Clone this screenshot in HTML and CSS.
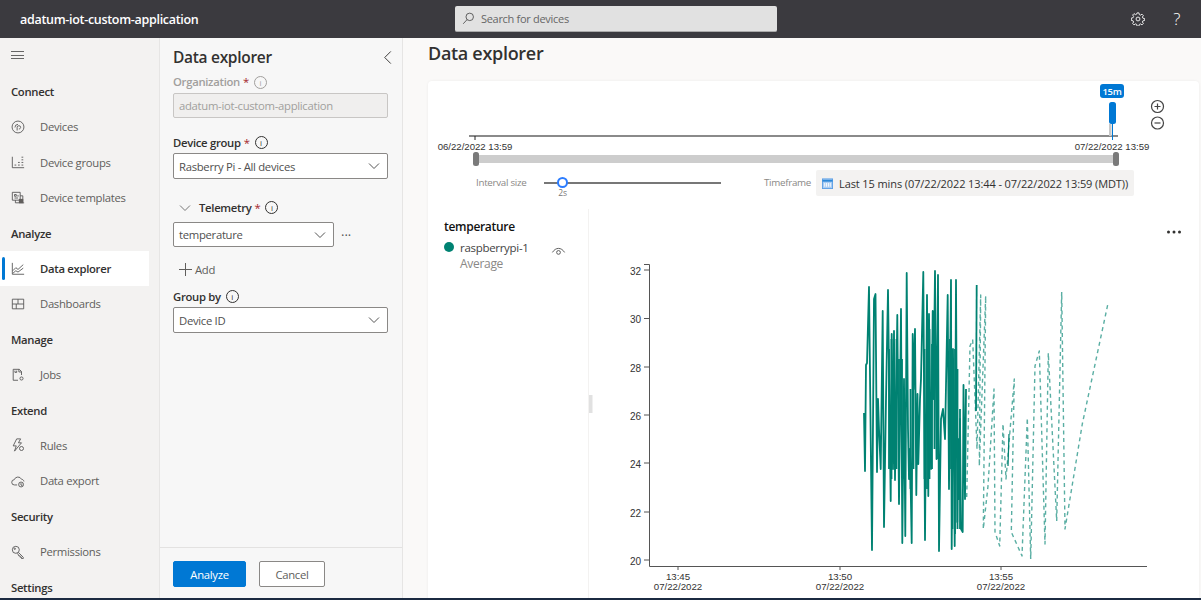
FILE: index.html
```html
<!DOCTYPE html>
<html lang="en">
<head>
  <meta charset="UTF-8" />
  <title>Data explorer</title>
  <link rel="stylesheet" href="styles.css">
</head>
<body>
  <header class="topbar">
    <div class="app-name">adatum-iot-custom-application</div>
    <div class="search">
      <svg class="search-icon" viewBox="0 0 16 16"><circle cx="9.5" cy="6" r="4.6"/><path d="M6.2 9.4 1.5 14.5"/></svg>
      <span>Search for devices</span>
    </div>
    <div class="top-icons">
      <svg class="gear" viewBox="0 0 16 16"><circle cx="8" cy="8" r="2.2"/><path d="M6.9 1h2.2l.4 2 1.3.6 1.8-1.1 1.5 1.5-1.1 1.8.6 1.3 2 .4v2.2l-2 .4-.6 1.3 1.1 1.8-1.5 1.5-1.8-1.1-1.3.6-.4 2H6.900l-.4-2-1.300-.6-1.800 1.100-1.500-1.500 1.100-1.800-.6-1.300-2-.4V6.900l2-.4.6-1.300-1.100-1.800 1.500-1.500 1.800 1.100 1.300-.6z"/></svg>
      <span class="help">?</span>
    </div>
  </header>

  <div class="layout">
    <nav class="sidenav">
      <div class="hamburger"><span></span><span></span><span></span></div>
      <div class="nav-head">Connect</div>
      <a class="nav-item">
        <svg viewBox="0 0 16 16"><circle cx="8" cy="8" r="6.8"/><path d="M4.500 8.500a3.500 3.500 0 0 1 3.500-3.500M7 12V8.500a2 2 0 0 1 4 0c0 1-1 1.800-2 1.800"/></svg>
        Devices</a>
      <a class="nav-item">
        <svg viewBox="0 0 16 16"><path d="M1.500 2v12.500H15M4 11.500h2M8 11.500h2M12 11.500h2M8 8.500h2M12 8.500h2M12 5.500h2M12 2.500h2"/></svg>
        Device groups</a>
      <a class="nav-item">
        <svg viewBox="0 0 16 16"><path d="M1.500 1.500h9v9h-9zM4 4h2v2H4zM8 4.500v2M4 8h4M10.500 5.500h3v7M5 10.500v3h10"/><path d="M9 9h5v5H9z" class="fill"/></svg>
        Device templates</a>
      <div class="nav-head">Analyze</div>
      <a class="nav-item active">
        <svg viewBox="0 0 16 16"><path d="M1.500 1v13h13.500M2 10l3.500-3.500 2.500 2L14 3M2 13l3.500-3 2.500 1.500L14 7"/></svg>
        Data explorer</a>
      <a class="nav-item">
        <svg viewBox="0 0 16 16"><path d="M1.500 2.500h13v11h-13zM1.500 8h13M8 2.500V8M6 8v5.500"/></svg>
        Dashboards</a>
      <div class="nav-head">Manage</div>
      <a class="nav-item">
        <svg viewBox="0 0 16 16"><path d="M8 14H2.500V1.500h7L12 4v4M9 1.500V4.500h3M4.500 3v2h2V3"/><circle cx="12" cy="12" r="1.800"/></svg>
        Jobs</a>
      <div class="nav-head">Extend</div>
      <a class="nav-item">
        <svg viewBox="0 0 16 16"><path d="M6.500 1h4.500L8.500 5.500h3.500L4 15l2-6H2.500z"/><circle cx="12" cy="12" r="2.300"/></svg>
        Rules</a>
      <a class="nav-item">
        <svg viewBox="0 0 16 16"><path d="M7 12.500H4a3 3 0 0 1-.3-6A4.500 4.500 0 0 1 12 6c1.300.1 2.500 1 2.800 2.500"/><circle cx="11.500" cy="12" r="2.800"/><path d="M10 11.500h3M11.500 13h1.500"/></svg>
        Data export</a>
      <div class="nav-head">Security</div>
      <a class="nav-item">
        <svg viewBox="0 0 16 16"><circle cx="5.500" cy="5.500" r="4"/><path d="M8.500 8.500 14 14v1.500h-2V14h-1.500v-1.500H9L7.500 9.500"/><circle cx="4.300" cy="4.300" r=".8"/></svg>
        Permissions</a>
      <div class="nav-head">Settings</div>
    </nav>

    <aside class="panel">
      <div class="panel-title">
        <h2>Data explorer</h2>
        <svg class="collapse" viewBox="0 0 10 16"><path d="M8 1.500 1.500 8 8 14.500"/></svg>
      </div>
      <div class="panel-body">
        <div class="label muted">Organization <b>*</b> <i class="info">i</i></div>
        <div class="field disabled">adatum-iot-custom-application</div>

        <div class="label gap-group">Device group <b>*</b> <i class="info">i</i></div>
        <div class="field">Rasberry Pi - All devices
          <svg class="caret" viewBox="0 0 12 8"><path d="M1 1.500 6 6.500l5-5"/></svg>
        </div>

        <div class="label telemetry">
          <svg class="caret small" viewBox="0 0 12 8"><path d="M1 1.500 6 6.500l5-5"/></svg>
          Telemetry <b>*</b> <i class="info">i</i>
        </div>
        <div class="field-row">
          <div class="field narrow">temperature
            <svg class="caret" viewBox="0 0 12 8"><path d="M1 1.500 6 6.500l5-5"/></svg>
          </div>
          <span class="more">···</span>
        </div>

        <div class="add">
          <svg class="plus" viewBox="0 0 13 13"><path d="M6.500 0v13M0 6.500h13"/></svg>
          Add
        </div>

        <div class="label by">Group by <i class="info">i</i></div>
        <div class="field">Device ID
          <svg class="caret" viewBox="0 0 12 8"><path d="M1 1.500 6 6.500l5-5"/></svg>
        </div>
      </div>
      <div class="panel-foot">
        <button class="btn primary">Analyze</button>
        <button class="btn">Cancel</button>
      </div>
    </aside>

    <main class="main">
      <h1>Data explorer</h1>
      <section class="card">
        <!-- viewBox uses page coordinates, easier to line up -->
        <svg class="brush" viewBox="428 81 771 87">
          <rect class="badge" x="1100" y="84" width="24" height="14" rx="3"/>
          <text class="badge-text" x="1112" y="95">15m</text>
          <path class="base" d="M469 136H1118"/>
          <path class="tick" d="M475 136v4"/>
          <rect class="grey" x="1109" y="124" width="2.500" height="12"/>
          <rect class="blue" x="1109" y="102" width="7" height="22" rx="2.500"/>
          <path class="stem" d="M1112.500 120v20"/>
          <text class="date" x="475" y="149.500">06/22/2022 13:59</text>
          <text class="date" x="1112" y="149.500">07/22/2022 13:59</text>
          <rect class="track" x="475" y="155" width="642" height="8"/>
          <rect class="handle" x="473" y="152" width="6" height="14" rx="2.500"/>
          <rect class="handle" x="1113" y="152" width="6" height="14" rx="2.500"/>
          <g class="zoom">
            <circle cx="1157.500" cy="106.500" r="6"/><path d="M1154.500 106.500h6M1157.500 103.500v6"/>
            <circle cx="1157.500" cy="123" r="6"/><path d="M1154.500 123h6"/>
          </g>
        </svg>

        <div class="controls">
          <span class="ctl-label interval">Interval size</span>
          <div class="slider"><span class="thumb"></span><span class="slider-val">2s</span></div>
          <span class="ctl-label timeframe">Timeframe</span>
          <div class="range-btn">
            <svg viewBox="0 0 12 12"><rect x="0.500" y="1" width="11" height="10.500" fill="#a9cdf3" stroke="#5b9fe6"/><path d="M0.500 3h11" stroke="#2b88d8" stroke-width="2"/><path d="M3 5.500v4M5 5.500v4M7 5.500v4M9 5.500v4" stroke="#fff"/></svg>
            Last 15 mins (07/22/2022 13:44 - 07/22/2022 13:59 (MDT))
          </div>
        </div>

        <div class="chart-row">
          <div class="legend">
            <div class="legend-title">temperature</div>
            <div class="legend-series">
              <span class="dot"></span>
              <div class="legend-names">
                <div>raspberrypi-1</div>
                <div class="avg">Average</div>
              </div>
              <svg class="eye" viewBox="0 0 16 10"><path d="M1.500 6.500C5 .8 11 .8 14.500 6.500"/><circle cx="8" cy="6.500" r="2"/></svg>
            </div>
          </div>
          <svg class="chart" viewBox="589 210 610 390">
            <rect class="grip" x="589" y="396" width="3.500" height="18"/>
            <g class="dots"><circle cx="1168.500" cy="233" r="1.500"/><circle cx="1174" cy="233" r="1.500"/><circle cx="1179.500" cy="233" r="1.500"/></g>

            <path class="axis" d="M644 265.500H649.500V567.500H1147M644 271h5M644 319.500h5M644 368h5M644 416h5M644 464h5M644 513h5M644 561h5M678 567v4M840 567v4M1001 567v4"/>
            <g class="ylabels">
              <text x="641" y="275.500">32</text><text x="641" y="324">30</text><text x="641" y="372.500">28</text>
              <text x="641" y="420.500">26</text><text x="641" y="468.500">24</text><text x="641" y="517.500">22</text><text x="641" y="565.500">20</text>
            </g>
            <g class="xlabels">
              <text x="678" y="581">13:45</text><text x="678" y="591">07/22/2022</text>
              <text x="840" y="581">13:50</text><text x="840" y="591">07/22/2022</text>
              <text x="1001" y="581">13:55</text><text x="1001" y="591">07/22/2022</text>
            </g>

            <polyline class="series" points="864,414 865,472 866,366 867,364 869,288 872,551 874,300 875.500,295 877,473 878,400 879,430 880.700,470 882.700,312 884,528 886,400 888,291 890.700,502 891.700,335 893,470 894,332 895,481 897.300,316 899,505 901,310 902.300,544 904,380 905.300,537 906.700,274 908,430 909,480 910,450 911.700,544 912.700,335 913.500,390 915,330 916.300,496 917.500,395 918.300,465 920,400 921,380 923.300,273 925,541 927,296 928.300,497 929,315 931,470 932.700,312 933.500,400 935,272 936.500,460 938,276 939,552 941,420 943,410 945,440 947.700,296 949,490 951,281 951.700,550 953,350 954.700,547 956,281 957.300,523 958,440 959,500 960,420 961,530 962.700,533 963.500,386 965,500 966,390"/>
            <!-- overlapping strokes in the busy part of the run -->
            <path class="series" d="M889 350V470M891.500 340V480M894 345V465M896.500 340V470M899 360V460M902 360V450M904 400V480M910.500 390V490M913.500 350V470M924.500 350V480M927 340V490M929.500 330V480M932 345V470M934.500 350V450M937 370V460M950 340V470M952.500 360V530M955 350V535M957.500 370V530M960 410V530"/>
            <polyline class="series" points="976.700,286 976,412"/>
            <polyline class="series thin" points="1009,435 1008,467"/>
            <polyline class="series dashed" points="966.700,498 970,347 972.700,341 977,450 980.700,296 979.300,467 985.700,297 983.300,530 988,487 994,390 995,533 999.700,547 1003,425 1006,480 1014.300,380 1011.300,533 1022,557 1027.300,419 1030.700,560 1035,367 1039.300,352 1045,545 1048.300,354 1056.700,522 1061.700,293 1065,530 1082.300,425 1108.300,303"/>
          </svg>
        </div>
      </section>
    </main>
  </div>
  <div class="bottom-edge"></div>
</body>
</html>
```

FILE: styles.css
```css
* {
  box-sizing: border-box;
}
html, body {
  margin: 0;
  height: 600px;
  overflow: hidden;
}
body {
  font-family: "Open Sans", "Noto Sans", sans-serif;
  font-size: 11.3px;
  letter-spacing: -.3px;
  color: #323130;
  background: #faf9f8;
  position: relative;
}
svg {
  fill: none;
  stroke: currentColor;
  display: block;
}

/* top bar */
.topbar {
  height: 38px;
  background: #3b3a3f;
  display: flex;
  align-items: center;
  color: #fff;
}
.app-name {
  width: 455px;
  padding-left: 20px;
  font-size: 12.5px;
  font-weight: 600;
}
.search {
  width: 322px;
  height: 26px;
  background: #e1e1e1;
  border-radius: 2px;
  border-bottom: 1px solid #aaa;
  display: flex;
  align-items: center;
  gap: 6px;
  padding-left: 7px;
  color: #666;
  font-size: 11px;
}
.search-icon {
  width: 13px;
  height: 13px;
  color: #444;
}
.top-icons {
  margin-left: auto;
  display: flex;
  align-items: center;
  gap: 28px;
  padding-right: 21px;
}
.gear {
  width: 14px;
  height: 14px;
}
.help {
  font-size: 17px;
  line-height: 20px;
  font-weight: 300;
}

.layout {
  display: flex;
  height: 562px;
}

/* left nav */
.sidenav {
  width: 160px;
  flex: none;
  background: #f3f2f1;
  border-right: 1px solid #e6e5e4;
  overflow: hidden;
}
.hamburger {
  height: 35.900px;
  padding: 13px 0 0 11px;
}
.hamburger span {
  display: block;
  width: 13px;
  height: 1px;
  background: #666;
  margin-bottom: 2.500px;
}
.nav-head,
.nav-item {
  height: 35.400px;
  display: flex;
  align-items: center;
}
.nav-head {
  padding-left: 11px;
  font-weight: 600;
}
.nav-item {
  width: 149px;
  padding-left: 11px;
  color: #605e5c;
  gap: 15px;
  position: relative;
}
.nav-item svg {
  width: 14px;
  height: 14px;
  flex: none;
  color: #555;
}
.nav-item.active {
  background: #fff;
  color: #323130;
  font-weight: 600;
}
.nav-item.active::before {
  content: "";
  position: absolute;
  left: 1.500px;
  top: 6px;
  bottom: 6px;
  width: 3px;
  border-radius: 2px;
  background: #0078d4;
}
.fill {
  fill: #605e5c;
  stroke: none;
}

/* filter panel */
.panel {
  width: 243px;
  flex: none;
  background: #f7f7f7;
  border-right: 1px solid #e6e5e4;
  display: flex;
  flex-direction: column;
}
.panel-title {
  display: flex;
  align-items: center;
  justify-content: space-between;
  height: 38px;
  padding: 0 9px 0 13px;
}
.panel-title h2 {
  margin: 0;
  font-size: 15.500px;
  font-weight: 600;
}
.collapse {
  width: 10px;
  height: 15px;
}
.panel-body {
  flex: 1;
  padding: 0 14px 0 13px;
}
.label {
  font-weight: 600;
  line-height: 16px;
  display: flex;
  align-items: center;
  gap: 3px;
}
.label b {
  color: #a4262c;
  font-weight: 400;
}
.label.muted {
  color: #a19f9d;
  margin-top: -2px;
}
.info {
  width: 13px;
  height: 13px;
  margin-left: 2px;
  border: 1px solid currentColor;
  border-radius: 50%;
  font-size: 8px;
  line-height: 11px;
  text-align: center;
  font-style: normal;
  font-weight: 400;
  letter-spacing: 0;
}
.field {
  height: 25.500px;
  margin-top: 2.700px;
  padding: 0 7px 0 5px;
  background: #fff;
  border: 1px solid #8a8886;
  border-radius: 2px;
  display: flex;
  align-items: center;
  justify-content: space-between;
  color: #505050;
}
.field.disabled {
  background: #f0efee;
  border-color: #c8c6c4;
  color: #a19f9d;
}
.field.narrow {
  width: 161px;
  margin-top: 0;
}
.caret {
  width: 12px;
  height: 8px;
  color: #555;
}
.caret.small {
  color: #777;
  margin: 0 5px 0 6px;
}
.gap-group {
  margin-top: 16.500px;
}
.telemetry {
  margin-top: 21px;
}
.field-row {
  display: flex;
  align-items: center;
  margin-top: 6px;
}
.more {
  margin-left: 7px;
  font-size: 13px;
  letter-spacing: 0;
  color: #555;
}
.add {
  display: flex;
  align-items: center;
  gap: 3px;
  margin: 9.800px 0 0 6px;
  height: 24px;
  color: #605e5c;
}
.plus {
  width: 13px;
  height: 13px;
}
.by {
  margin-top: 7.500px;
}
.panel-foot {
  height: 53px;
  border-top: 1px solid #e3e2e1;
  padding: 13px 0 0 13px;
  display: flex;
  gap: 13px;
  align-items: flex-start;
}
.btn {
  font: inherit;
  letter-spacing: inherit;
  width: 66px;
  height: 26px;
  background: #fff;
  color: #605e5c;
  border: 1px solid #8a8886;
  border-radius: 2px;
  padding: 0;
}
.btn.primary {
  width: 73px;
  background: #0078d4;
  border-color: #0078d4;
  color: #fff;
}

/* main */
.main {
  flex: 1;
  min-width: 0;
  padding-left: 25px;
}
.main h1 {
  margin: 0;
  height: 43px;
  font-size: 18px;
  font-weight: 600;
  line-height: 31px;
}
.card {
  width: 771px;
  height: 519px;
  background: #fff;
  border-radius: 4px 4px 0 0;
  box-shadow: 0 0 3px rgba(0, 0, 0, .06);
}
.brush {
  width: 771px;
  height: 87px;
  stroke: none;
}
.badge, .blue {
  fill: #0078d4;
}
.badge-text {
  fill: #fff;
  font-size: 9.500px;
  font-weight: 600;
  text-anchor: middle;
}
.base {
  stroke: #8a8a8a;
  stroke-width: 2;
}
.tick {
  stroke: #222;
}
.grey {
  fill: #c8c8c8;
}
.stem {
  stroke: #0078d4;
  stroke-width: 1;
}
.date {
  fill: #333;
  font-family: "Liberation Sans", sans-serif;
  font-size: 9.600px;
  letter-spacing: 0;
  text-anchor: middle;
}
.track {
  fill: #cdcdcd;
}
.handle {
  fill: #7a7a7a;
}
.zoom {
  stroke: #444;
  stroke-width: 1.200;
}
.controls {
  height: 41px;
  display: flex;
  align-items: flex-start;
  padding-top: 2px;
}
.ctl-label {
  color: #8a8886;
  font-size: 9.800px;
  line-height: 26px;
}
.interval {
  margin-left: 48px;
  width: 68px;
}
.slider {
  width: 177px;
  height: 2px;
  margin-top: 12px;
  background: #777;
  position: relative;
}
.thumb {
  position: absolute;
  left: 13px;
  top: -5px;
  width: 11px;
  height: 11px;
  border-radius: 50%;
  background: #fff;
  border: 2px solid #2b7cff;
}
.slider-val {
  position: absolute;
  left: 13px;
  width: 11px;
  top: 6px;
  text-align: center;
  font-size: 8.500px;
  line-height: 10px;
  color: #777;
}
.timeframe {
  margin-left: 43px;
  width: 52px;
}
.range-btn {
  width: 318px;
  height: 26px;
  background: #f3f2f1;
  border-radius: 2px;
  display: flex;
  align-items: center;
  gap: 6px;
  padding-left: 6px;
  font-size: 11px;
  letter-spacing: -.1px;
  white-space: nowrap;
}
.range-btn svg {
  width: 11px;
  height: 11px;
  stroke: none;
  flex: none;
}
.chart-row {
  display: flex;
  height: 390px;
}
.legend {
  width: 161px;
  flex: none;
  padding: 9px 22px 0 16px;
  border-right: 1px solid #f3f2f1;
}
.legend-title {
  font-weight: 600;
  color: #111;
  font-size: 12px;
  line-height: 17px;
}
.legend-series {
  display: flex;
  margin-top: 5px;
}
.dot {
  width: 10px;
  height: 10px;
  margin: 2px 6px 0 0;
  border-radius: 50%;
  background: #008272;
  flex: none;
}
.legend-names {
  line-height: 16px;
  color: #444;
  font-size: 11.500px;
  letter-spacing: -.3px;
}
.avg {
  color: #8a8886;
  font-size: 12px;
}
.eye {
  width: 15px;
  height: 10px;
  margin: 6px 0 0 auto;
  color: #555;
}
.chart {
  width: 610px;
  height: 390px;
  stroke: none;
  font-family: "Liberation Sans", sans-serif;
  font-size: 10px;
  letter-spacing: 0;
}
.grip {
  fill: #e1e1e1;
}
.dots {
  fill: #323130;
}
.axis {
  fill: none;
  stroke: #555;
  stroke-width: 1;
}
.ylabels text {
  fill: #333;
  text-anchor: end;
}
.xlabels text {
  fill: #333;
  text-anchor: middle;
  font-size: 9.700px;
}
.series {
  fill: none;
  stroke: #008272;
  stroke-width: 1.800;
  stroke-linejoin: round;
}
.series.thin {
  stroke-width: 1.200;
}
.series.dashed {
  stroke-width: 1.400;
  stroke-dasharray: 4 3.500;
  opacity: .65;
}
.bottom-edge {
  position: absolute;
  left: 0;
  right: 0;
  bottom: 0;
  height: 2px;
  background: #1b2a41;
}
```
